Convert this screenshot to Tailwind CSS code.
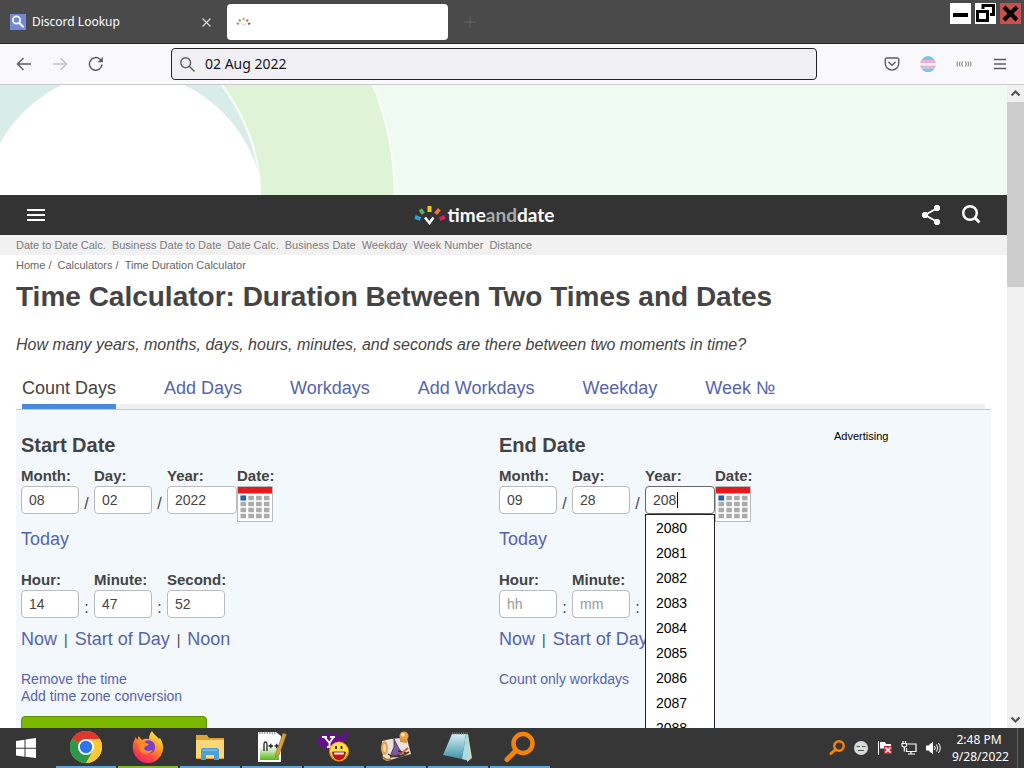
<!DOCTYPE html>
<html lang="en">

<head>
    <meta charset="UTF-8">
    <meta name="viewport" content="width=device-width, initial-scale=1.0">
    <title>Time Calculator: Duration Between Two Times and Dates</title>
    <script src="https://cdn.jsdelivr.net/npm/@tailwindcss/browser@4"></script>
</head>

<body class="h-screen flex flex-col overflow-hidden bg-white font-['Liberation_Sans',sans-serif] text-[#444]">
    <!-- Tab strip -->
    <header class="h-11 shrink-0 flex items-start bg-[#4a4a4a] border-b border-[#222] font-['Noto_Sans',sans-serif]">
        <div class="w-[223px] h-11 pl-[10px] pr-3 flex items-center gap-[6px] text-white text-xs">
            <svg class="size-4" viewBox="0 0 16 16">
                <rect width="16" height="16" fill="#7289da" />
                <circle cx="6.5" cy="6" r="3.6" fill="none" stroke="#fff" stroke-width="1.7" />
                <path d="M9.2 8.8l4.3 4.4" stroke="#fff" stroke-width="2" />
            </svg>
            <span class="flex-1">Discord Lookup</span>
            <button aria-label="Close tab">
                <svg class="size-[9px]" viewBox="0 0 9 9" stroke="#ddd" stroke-width="1.1">
                    <path d="M.5.5l8 8M8.5.5l-8 8" />
                </svg>
            </button>
        </div>
        <div class="w-[221px] h-9 mt-1 ml-1 px-[9px] flex items-center rounded bg-white">
            <svg class="w-[15px] h-[10px]" viewBox="0 0 15 10">
                <path d="M.8 6.2l2.2 1" stroke="#7b97a5" stroke-width="2" />
                <path d="M3 2.6l1.600 1.800" stroke="#8aa06a" stroke-width="2" />
                <path d="M7.500.8v2.400" stroke="#c8a658" stroke-width="2" />
                <path d="M12 2.600l-1.600 1.800" stroke="#b9764f" stroke-width="2" />
                <path d="M14.200 6.200l-2.200 1" stroke="#a8576f" stroke-width="2" />
                <path d="M5.500 6.500l2 2 2-2" fill="none" stroke="#ccc" stroke-width="1" />
            </svg>
        </div>
        <button class="ml-4 mt-4" aria-label="New tab">
            <svg class="size-3" viewBox="0 0 12 12" stroke="#666" stroke-width="1">
                <path d="M6 0v12M0 6h12" />
            </svg>
        </button>
        <div class="ml-auto mt-[3px] mr-[3px] flex gap-1">
            <button class="size-[21px] bg-white" aria-label="Minimize">
                <svg viewBox="0 0 21 21">
                    <path d="M3 12h15" stroke="#000" stroke-width="4" />
                </svg>
            </button>
            <button class="size-[21px] bg-white" aria-label="Restore">
                <svg viewBox="0 0 21 21" fill="none" stroke="#000" stroke-width="3">
                    <path d="M2.500 8.500h10v9h-10z" />
                    <path d="M8 6V2.500h10.500v9H15" />
                </svg>
            </button>
            <button class="size-[21px] bg-[#c75050]" aria-label="Close">
                <svg viewBox="0 0 21 21">
                    <path d="M4 4l13 13M17 4L4 17" stroke="#000" stroke-width="4.200" />
                </svg>
            </button>
        </div>
    </header>

    <!-- Toolbar -->
    <nav class="h-[41px] shrink-0 px-4 flex items-center bg-[#f9f9fb] border-b border-[#ccc] font-['Noto_Sans',sans-serif]">
        <button aria-label="Back">
            <svg class="size-4" viewBox="0 0 16 16" fill="none" stroke="#5b5b66" stroke-width="1.400">
                <path d="M15 8H1.500M7.500 2l-6 6 6 6" />
            </svg>
        </button>
        <button class="ml-5" aria-label="Forward">
            <svg class="size-4" viewBox="0 0 16 16" fill="none" stroke="#c4c4c8" stroke-width="1.400">
                <path d="M1 8h13.500M8.500 2l6 6-6 6" />
            </svg>
        </button>
        <button class="ml-5" aria-label="Reload">
            <svg class="size-4" viewBox="0 0 16 16" fill="none" stroke="#5b5b66" stroke-width="1.500">
                <path d="M14 8.500a6.300 6.300 0 1 1-2-5.200l2.500 2.500" />
                <path d="M14.800 1v5.200H9.600z" fill="#5b5b66" stroke="none" />
            </svg>
        </button>
        <div class="h-8 mx-[67px] flex-1 pl-2 flex items-center gap-[10px] rounded bg-[#f0f0f4] border border-[#222]">
            <svg class="size-[15px]" viewBox="0 0 15 15" fill="none" stroke="#5b5b66" stroke-width="1.400">
                <circle cx="5.700" cy="5.700" r="4.900" />
                <path d="M9.300 9.300l5.200 5.200" />
            </svg>
            <input class="flex-1 text-sm text-[#15141a] outline-none" type="text" aria-label="Address" value="02 Aug 2022">
        </div>
        <div class="flex items-center gap-5">
            <button aria-label="Save to Pocket">
                <svg class="size-4" viewBox="0 0 16 16" fill="none" stroke="#5b5b66" stroke-width="1.400" stroke-linejoin="round" stroke-linecap="round">
                    <path d="M2.500 2h11a1.300 1.300 0 0 1 1.300 1.300v4a6.800 6.800 0 0 1-13.600 0v-4A1.300 1.300 0 0 1 2.500 2z" />
                    <path d="M4.800 6.300L8 9.300l3.200-3" />
                </svg>
            </button>
            <button aria-label="Extension">
                <svg class="size-4" viewBox="0 0 16 16">
                    <path d="M3 2a8 8 0 0 1 10 0l1.500 2h-13z" fill="#7fc4e4" />
                    <path d="M1.200 4h13.600l1.200 3H0z" fill="#e6b3d3" />
                    <path d="M0 7h16v2.500H0z" fill="#f7eef5" />
                    <path d="M0 9.500h16l-1.200 3H1.200z" fill="#e6b3d3" />
                    <path d="M1.500 12.500h13l-1.500 2a8 8 0 0 1-10 0z" fill="#7fc4e4" />
                </svg>
            </button>
            <button aria-label="Broadcast">
                <svg class="size-4" viewBox="0 0 16 16" fill="none" stroke="#77777d" stroke-width="1">
                    <path d="M1.500 5.500q-1 2.500 0 5M4 5.500q-1 2.500 0 5M6.500 5.500q-1.500 2.500 0 5M9.500 5.500q1.500 2.500 0 5M12 5.500q1 2.500 0 5M14.500 5.500q1 2.500 0 5" />
                </svg>
            </button>
            <button aria-label="Menu">
                <svg class="size-4" viewBox="0 0 16 16" stroke="#5b5b66" stroke-width="1.300">
                    <path d="M2 3.500h12M2 8h12M2 12.500h12" />
                </svg>
            </button>
        </div>
    </nav>

    <!-- Page -->
    <div class="flex-1 min-h-0 flex">
        <main class="flex-1 min-w-0 overflow-hidden">
            <!-- Ad banner -->
            <div class="h-[110px] bg-[#eefaf2]">
                <svg class="w-[400px] h-[110px]" viewBox="0 0 400 110">
                    <path d="M0 0H230L270 110H0z" fill="#d8ede8" />
                    <circle cx="123" cy="127" r="141" fill="#fff" />
                    <path d="M222 0Q260 52 260 110H394Q393 50 372 0z" fill="#dff3d7" />
                    <path d="M222 0Q260 52 260 110" fill="none" stroke="#fbfffb" stroke-width="2" />
                    <path d="M373 0Q394 50 395 110" fill="none" stroke="#f6fdf8" stroke-width="2" />
                </svg>
            </div>

            <!-- Site header -->
            <div class="h-10 pl-[27px] pr-[26px] grid grid-cols-[1fr_auto_1fr] items-center bg-[#333]">
                <button class="w-[18px]" aria-label="Site menu">
                    <svg class="w-[18px] h-3" viewBox="0 0 18 12" fill="#fff">
                        <path d="M0 0h18v2H0zM0 5h18v2H0zM0 10h18v2H0z" />
                    </svg>
                </button>
                <a href="#" class="-ml-10 flex items-center gap-[2px] font-['Lato',sans-serif] font-bold text-[19px] leading-5 text-white">
                    <svg class="w-8 h-5" viewBox="0 0 32 20">
                        <path d="M1 11.800l5.500 2.200" stroke="#2f9fe0" stroke-width="4" />
                        <path d="M6.300 4.300l3 4.500" stroke="#5cb05a" stroke-width="3.800" />
                        <path d="M15.500 1v6" stroke="#f5c518" stroke-width="4" />
                        <path d="M25.500 4.300l-4 4.500" stroke="#e87a3f" stroke-width="3.800" />
                        <path d="M31 11.800l-5.500 2.200" stroke="#e01f5a" stroke-width="4" />
                        <path d="M11 12.500l4.500 5.500 4-5.500" fill="none" stroke="#fff" stroke-width="2.600" />
                    </svg>
                    <span>time<span class="text-[#aaa]">and</span>date</span>
                </a>
                <div class="flex justify-end gap-5">
                    <button aria-label="Share">
                        <svg class="w-5 h-[22px]" viewBox="0 0 20 22" fill="#fff" stroke="#fff">
                            <path d="M16.500 4L4 11l12.500 7" fill="none" stroke-width="2" />
                            <circle cx="16" cy="4" r="2.700" />
                            <circle cx="4" cy="11" r="2.700" />
                            <circle cx="16" cy="18" r="2.700" />
                        </svg>
                    </button>
                    <button aria-label="Search">
                        <svg class="w-5 h-[22px]" viewBox="0 0 20 22" fill="none" stroke="#fff">
                            <circle cx="9" cy="9" r="6.800" stroke-width="2.500" />
                            <path d="M13.500 13.500l5 5" stroke-width="3" />
                        </svg>
                    </button>
                </div>
            </div>
            <div class="h-5 pl-4 flex items-center gap-[6px] bg-[#f1f1f1] text-[11px] text-[#7c7c7c] whitespace-nowrap">
                <a href="#">Date to Date Calc.</a>
                <a href="#">Business Date to Date</a>
                <a href="#">Date Calc.</a>
                <a href="#">Business Date</a>
                <a href="#">Weekday</a>
                <a href="#">Week Number</a>
                <a href="#">Distance</a>
            </div>
            <div class="h-5 pl-4 flex items-center gap-[6px] text-[11px] text-[#666]">
                <span><a href="#">Home</a> /</span>
                <span><a href="#">Calculators</a> /</span>
                <span>Time Duration Calculator</span>
            </div>

            <div class="px-4">
                <h1 class="pt-1 text-[28px] leading-9 font-bold whitespace-nowrap">Time Calculator: Duration Between Two Times and Dates</h1>
                <p class="pt-[18px] text-base leading-6 italic">How many years, months, days, hours, minutes, and seconds are there between two moments in time?</p>

                <div class="mt-[18px] mx-[6px] flex gap-12 text-lg leading-[26px] text-[#5564ad] whitespace-nowrap border-b-[5px] border-[#eef0f2]">
                    <a href="#" class="-mb-[5px] pb-[3px] border-b-[5px] border-[#4a89dc] text-[#444]">Count Days</a>
                    <a href="#">Add Days</a>
                    <a href="#">Workdays</a>
                    <a href="#">Add Workdays</a>
                    <a href="#">Weekday</a>
                    <a href="#">Week №</a>
                </div>

                <form class="h-[400px] pl-[5px] grid grid-cols-[478fr_335fr_157fr] bg-[#f3f8fc] border-t border-[#c5c9cc]">
                    <!-- Start date -->
                    <section>
                        <h2 class="pt-[21px] text-xl leading-7 font-bold">Start Date</h2>
                        <div class="pt-[7px] flex items-start text-[14px]">
                            <div class="w-[58px]">
                                <label for="startMonth" class="block leading-5 text-[15px] font-bold">Month:</label>
                                <input id="startMonth" type="text" value="08" class="w-full h-7 px-[7px] bg-white border border-[#bbb] rounded">
                            </div>
                            <span class="w-[15px] pt-[26px] text-center text-base leading-6">/</span>
                            <div class="w-[58px]">
                                <label for="startDay" class="block leading-5 text-[15px] font-bold">Day:</label>
                                <input id="startDay" type="text" value="02" class="w-full h-7 px-[7px] bg-white border border-[#bbb] rounded">
                            </div>
                            <span class="w-[15px] pt-[26px] text-center text-base leading-6">/</span>
                            <div class="w-[70px]">
                                <label for="startYear" class="block leading-5 text-[15px] font-bold">Year:</label>
                                <input id="startYear" type="text" value="2022" class="w-full h-7 px-[7px] bg-white border border-[#bbb] rounded">
                            </div>
                            <div class="w-9">
                                <div class="leading-5 text-[15px] font-bold">Date:</div>
                                <button type="button" class="block" aria-label="Pick start date">
                                    <svg class="size-9" viewBox="0 0 36 36">
                                        <path d="M.5.5h35v35H.5z" fill="#fff" stroke="#bbb" />
                                        <path d="M1 1h34v6.500H1z" fill="#e8191c" />
                                        <path d="M3.500 12h29M3.500 18h29M3.500 24h29M3.500 30h29" stroke="#aaa" stroke-width="4.600" stroke-dasharray="5.600 2.200" />
                                        <path d="M3.500 9.500h5.600v5H3.500z" fill="#1c63ad" />
                                    </svg>
                                </button>
                            </div>
                        </div>
                        <a href="#" class="block pt-1 text-lg leading-[26px] text-[#5564ad]">Today</a>
                        <div class="pt-[18px] flex items-start text-[14px]">
                            <div class="w-[58px]">
                                <label for="startHour" class="block leading-5 text-[15px] font-bold">Hour:</label>
                                <input id="startHour" type="text" value="14" class="w-full h-7 px-[7px] bg-white border border-[#bbb] rounded">
                            </div>
                            <span class="w-[15px] pt-[26px] text-center text-base leading-6">:</span>
                            <div class="w-[58px]">
                                <label for="startMinute" class="block leading-5 text-[15px] font-bold">Minute:</label>
                                <input id="startMinute" type="text" value="47" class="w-full h-7 px-[7px] bg-white border border-[#bbb] rounded">
                            </div>
                            <span class="w-[15px] pt-[26px] text-center text-base leading-6">:</span>
                            <div class="w-[58px]">
                                <label for="startSecond" class="block leading-5 text-[15px] font-bold">Second:</label>
                                <input id="startSecond" type="text" value="52" class="w-full h-7 px-[7px] bg-white border border-[#bbb] rounded">
                            </div>
                        </div>
                        <div class="pt-[6px] flex items-baseline gap-[7px] text-lg leading-[26px] text-[#5564ad]">
                            <a href="#">Now</a>
                            <span class="text-sm text-[#444]">|</span>
                            <a href="#">Start of Day</a>
                            <span class="text-sm text-[#444]">|</span>
                            <a href="#">Noon</a>
                        </div>
                        <div class="pt-[19px] text-sm leading-[17px] text-[#5564ad]">
                            <a href="#" class="block">Remove the time</a>
                            <a href="#" class="block">Add time zone conversion</a>
                        </div>
                        <button type="submit" class="mt-[11px] w-[186px] h-10 rounded bg-[#7ab800] border border-[#5f9000]" aria-label="Calculate duration"></button>
                    </section>

                    <!-- End date -->
                    <section>
                        <h2 class="pt-[21px] text-xl leading-7 font-bold">End Date</h2>
                        <div class="pt-[7px] flex items-start text-[14px]">
                            <div class="w-[58px]">
                                <label for="endMonth" class="block leading-5 text-[15px] font-bold">Month:</label>
                                <input id="endMonth" type="text" value="09" class="w-full h-7 px-[7px] bg-white border border-[#bbb] rounded">
                            </div>
                            <span class="w-[15px] pt-[26px] text-center text-base leading-6">/</span>
                            <div class="w-[58px]">
                                <label for="endDay" class="block leading-5 text-[15px] font-bold">Day:</label>
                                <input id="endDay" type="text" value="28" class="w-full h-7 px-[7px] bg-white border border-[#bbb] rounded">
                            </div>
                            <span class="w-[15px] pt-[26px] text-center text-base leading-6">/</span>
                            <div class="w-[70px] relative">
                                <label for="endYear" class="block leading-5 text-[15px] font-bold">Year:</label>
                                <input id="endYear" type="text" value="208" class="w-full h-7 px-[7px] bg-white border border-[#666] rounded">
                                <!-- Text cursor -->
                                <span class="absolute left-8 top-[26px] w-px h-4 bg-black"></span>
                                <!-- Autocomplete list -->
                                <ul class="absolute left-0 top-12 z-10 w-[70px] pt-px pl-[10px] bg-white border border-[#222] text-[14px] leading-[25px] text-black">
                                    <li>2080</li>
                                    <li>2081</li>
                                    <li>2082</li>
                                    <li>2083</li>
                                    <li>2084</li>
                                    <li>2085</li>
                                    <li>2086</li>
                                    <li>2087</li>
                                    <li>2088</li>
                                </ul>
                            </div>
                            <div class="w-9">
                                <div class="leading-5 text-[15px] font-bold">Date:</div>
                                <button type="button" class="block" aria-label="Pick end date">
                                    <svg class="size-9" viewBox="0 0 36 36">
                                        <path d="M.5.5h35v35H.5z" fill="#fff" stroke="#bbb" />
                                        <path d="M1 1h34v6.500H1z" fill="#e8191c" />
                                        <path d="M3.500 12h29M3.500 18h29M3.500 24h29M3.500 30h29" stroke="#aaa" stroke-width="4.600" stroke-dasharray="5.600 2.200" />
                                        <path d="M3.500 9.500h5.600v5H3.500z" fill="#1c63ad" />
                                    </svg>
                                </button>
                            </div>
                        </div>
                        <a href="#" class="block pt-1 text-lg leading-[26px] text-[#5564ad]">Today</a>
                        <div class="pt-[18px] flex items-start text-[14px]">
                            <div class="w-[58px]">
                                <label for="endHour" class="block leading-5 text-[15px] font-bold">Hour:</label>
                                <input id="endHour" type="text" placeholder="hh" class="w-full h-7 px-[7px] bg-white border border-[#bbb] rounded placeholder:text-[#999]">
                            </div>
                            <span class="w-[15px] pt-[26px] text-center text-base leading-6">:</span>
                            <div class="w-[58px]">
                                <label for="endMinute" class="block leading-5 text-[15px] font-bold">Minute:</label>
                                <input id="endMinute" type="text" placeholder="mm" class="w-full h-7 px-[7px] bg-white border border-[#bbb] rounded placeholder:text-[#999]">
                            </div>
                            <span class="w-[15px] pt-[26px] text-center text-base leading-6">:</span>
                        </div>
                        <div class="pt-[6px] flex items-baseline gap-[7px] text-lg leading-[26px] text-[#5564ad]">
                            <a href="#">Now</a>
                            <span class="text-sm text-[#444]">|</span>
                            <a href="#">Start of Day</a>
                        </div>
                        <div class="pt-[19px] text-sm leading-[17px] text-[#5564ad]">
                            <a href="#" class="block">Count only workdays</a>
                        </div>
                    </section>

                    <aside class="pt-[18px] text-[11px] leading-4 text-black">Advertising</aside>
                </form>
            </div>
        </main>

        <!-- Scrollbar -->
        <div class="w-[17px] shrink-0 flex flex-col items-center bg-[#f0f0f0]">
            <svg class="w-[17px] h-[17px] shrink-0" viewBox="0 0 17 17" fill="none" stroke="#505050" stroke-width="2">
                <path d="M4.500 10.500l4-4 4 4" />
            </svg>
            <div class="w-full h-[185px] bg-[#cdcdcd]"></div>
            <svg class="w-[17px] h-[17px] shrink-0 mt-auto" viewBox="0 0 17 17" fill="none" stroke="#505050" stroke-width="2">
                <path d="M4.500 6.500l4 4 4-4" />
            </svg>
        </div>
    </div>

    <!-- Taskbar -->
    <footer class="h-10 shrink-0 flex bg-[#363636] text-white font-['Noto_Sans',sans-serif]">
        <button class="w-14 pr-1 flex items-center justify-center" aria-label="Start">
            <svg class="size-5" viewBox="0 0 20 20" fill="#fff">
                <path d="M0 3l8.500-1.300v8H0zM9.500 1.500L20 0v9.700H9.500zM0 10.700h8.500v8L0 17.500zM9.500 10.700H20V20L9.500 18.700z" />
            </svg>
        </button>
        <div class="flex gap-[2px]">
            <button class="w-[60px] flex items-center justify-center border-b-2 border-[#5aa7e0]" aria-label="Chrome">
                <svg class="size-8" viewBox="0 0 32 32">
                    <circle cx="16" cy="16" r="16" fill="#fcc934" />
                    <path d="M16 16L2.100 8A16 16 0 0 1 29.900 8z" fill="#e0392b" />
                    <path d="M2.100 8A16 16 0 0 0 16 32l7-12-7-4z" fill="#2a9a48" />
                    <path d="M16 8h13.900A16 16 0 0 1 16 32l7-12z" fill="#fcc934" />
                    <circle cx="16" cy="16" r="8" fill="#fff" />
                    <circle cx="16" cy="16" r="6.200" fill="#2f74e8" />
                </svg>
            </button>
            <button class="w-[60px] flex items-center justify-center border-b-2 border-[#82bb2c]" aria-label="Firefox">
                <svg class="size-8" viewBox="0 0 32 32">
                    <defs>
                        <linearGradient id="fox" x1=".8" y1="0" x2=".2" y2="1">
                            <stop offset="0" stop-color="#fff04f" />
                            <stop offset=".35" stop-color="#ffa329" />
                            <stop offset=".7" stop-color="#ff4a3e" />
                            <stop offset="1" stop-color="#e4197c" />
                        </linearGradient>
                    </defs>
                    <path d="M20 0c1 3 5 5 7 8l1-1c3 5 4 9 2.500 14A15 15 0 0 1 1.500 21C0 16 1 11 3 8l.5-2 2 3 1-4 3.500 4c3-2 6-1 7-1 0-3 1-6 3-8z" fill="url(#fox)" />
                    <circle cx="16.500" cy="16" r="6.700" fill="#7a3fd0" />
                    <path d="M6 10c4-1 6 0 8 2l3 1c-1 2-4 2-5 4 1 4 6 3 9 2-4 6-12 5-14-1z" fill="#ff8a25" />
                </svg>
            </button>
            <button class="w-[60px] flex items-center justify-center border-b-2 border-[#5aa7e0]" aria-label="File Explorer">
                <svg class="size-8" viewBox="0 0 32 32">
                    <path d="M2 4h11l2 3h15v21H2z" fill="#dca535" />
                    <path d="M2 9h28v18H2z" fill="#fbd875" />
                    <path d="M7 29V19q0-2 2-2h14q2 0 2 2v10h-5v-5h-8v5z" fill="#4d9fd6" />
                    <path d="M9 18.500h14v1.500H9z" fill="#78bde8" />
                </svg>
            </button>
            <button class="w-[60px] flex items-center justify-center border-b-2 border-[#5aa7e0]" aria-label="Notepad++">
                <svg class="size-8" viewBox="0 0 32 32">
                    <defs>
                        <linearGradient id="npp" x1="0" y1="0" x2="0" y2="1">
                            <stop offset=".35" stop-color="#fff" />
                            <stop offset="1" stop-color="#55b713" />
                        </linearGradient>
                    </defs>
                    <path d="M2 1h18l5 4v26H2z" fill="#fff" />
                    <path d="M4 8h19v21H4z" fill="url(#npp)" />
                    <path d="M3 2h17" stroke="#aaa" stroke-width="2" stroke-dasharray="1.500 1" />
                    <path d="M8 20v-7q0-2 1.500-2t1.500 2v7M12.500 15h4.500M14.800 12.800v4.500M18.500 15H23M20.700 12.800v4.500" fill="none" stroke="#222" stroke-width="1.300" />
                    <path d="M27 2l3.500 1.500L23 24l-3.500 2 .5-4z" fill="#d7a33f" stroke="#8a6320" stroke-width=".6" />
                </svg>
            </button>
            <button class="w-[60px] flex items-center justify-center border-b-2 border-[#5aa7e0]" aria-label="Yahoo Messenger">
                <svg class="size-8" viewBox="0 0 32 32">
                    <ellipse cx="12" cy="10" rx="12.500" ry="8" fill="#65108a" />
                    <path d="M25 2l6-1-5 11-4 2z" fill="#5c1688" />
                    <path d="M4 6h5M12 6h5M6.500 6l5 6 4-6M11.500 12v4M9 16h5" fill="none" stroke="#fff" stroke-width="1.900" />
                    <circle cx="21" cy="20.500" r="10" fill="#f28e13" />
                    <circle cx="21" cy="20" r="8.800" fill="#ffe14d" />
                    <path d="M14.500 21h13q-.5 7.500-6.500 7.500T14.500 21z" fill="#c9131c" stroke="#5b1a00" stroke-width=".8" />
                    <path d="M16 21.500h10l-.5 2h-9z" fill="#fff" />
                    <path d="M18 15v3M23.500 15v3" stroke="#3a1f00" stroke-width="1.800" />
                </svg>
            </button>
            <button class="w-[60px] flex items-center justify-center border-b-2 border-[#5aa7e0]" aria-label="Wizard">
                <svg class="size-8" viewBox="0 0 32 32">
                    <path d="M2 10q13-4 25-2l4 15q-12 3-24 7l-4-2z" fill="#e8e4dc" />
                    <ellipse cx="4.500" cy="17" rx="3.500" ry="7" fill="#e3a257" />
                    <ellipse cx="4.500" cy="17" rx="1.500" ry="4" fill="#f6d6a2" />
                    <path d="M3 26q3 4 8 2" stroke="#b97329" stroke-width="2" fill="none" />
                    <path d="M14 8l4 8 4 6q-6 4-11 1l3-7z" fill="#7b5d9f" stroke="#38284c" stroke-width=".8" />
                    <path d="M8 23q8 6 21-2M18 20l8 2M10 26l14-2" stroke="#4b2c22" stroke-width="1.500" fill="none" />
                    <path d="M22 22l6-5" stroke="#de5b24" stroke-width="2" />
                    <circle cx="24" cy="5" r="4.500" fill="#e9a24c" />
                    <circle cx="23" cy="3.800" r="1.800" fill="#ffe7b8" />
                    <path d="M20 8l8 1-1 3-7-1z" fill="#d8903a" />
                </svg>
            </button>
            <button class="w-[60px] flex items-center justify-center border-b-2 border-[#5aa7e0]" aria-label="Notepad">
                <svg class="size-8" viewBox="0 0 32 32">
                    <defs>
                        <linearGradient id="pad" x1="0" y1="0" x2="0" y2="1">
                            <stop offset="0" stop-color="#d7eff3" />
                            <stop offset="1" stop-color="#3f93a8" />
                        </linearGradient>
                    </defs>
                    <path d="M26 3l4 24-5 4z" fill="#d8d5ae" />
                    <path d="M10 3h14l-4 25-19-4z" fill="url(#pad)" />
                    <path d="M24 3h2l1 27-7-2z" fill="#a9dbe4" />
                    <path d="M10 2.500h16" stroke="#778" stroke-width="2" stroke-dasharray="1.200 1" />
                </svg>
            </button>
            <button class="w-[60px] flex items-center justify-center border-b-2 border-[#5aa7e0]" aria-label="Search app">
                <svg class="size-8" viewBox="0 0 32 32" fill="none" stroke="#f5820b">
                    <circle cx="19" cy="12.500" r="9.500" stroke-width="4.500" />
                    <path d="M12 19.500l-9 9" stroke-width="5" stroke-linecap="round" />
                </svg>
            </button>
        </div>

        <!-- Tray -->
        <div class="ml-auto flex items-center gap-2 text-xs">
            <svg class="size-4" viewBox="0 0 16 16" fill="none" stroke="#f5820b">
                <circle cx="10" cy="6" r="4.700" stroke-width="2.500" />
                <path d="M6.500 9.500l-4.500 4" stroke-width="3" stroke-linecap="round" />
            </svg>
            <svg class="size-4" viewBox="0 0 16 16">
                <circle cx="8" cy="8" r="7" fill="#d5dadd" />
                <path d="M3.500 6.500h3.500M9 6.500h3.500M5 10.500h6" stroke="#555" stroke-width="1.200" />
            </svg>
            <svg class="size-4" viewBox="0 0 16 16">
                <path d="M1.500 1v14" stroke="#fff" />
                <path d="M3 2h5l1 2h5v6H9L8 8.500H3z" fill="#fff" />
                <path d="M7 6h8v8H7z" fill="#c92b38" />
                <path d="M8.500 7.500l5 5M13.500 7.500l-5 5" stroke="#fff" stroke-width="1.500" />
            </svg>
            <svg class="size-4" viewBox="0 0 16 16" fill="none" stroke="#fff" stroke-width="1.200">
                <path d="M6.500 4h8.500v7.500H5.500V8M10 11.500v2M7 14h7" />
                <path d="M1 3.500h4.500V6L3.300 7.500 1 6zM2 1v2.500M4.500 1v2.500M3.300 7.500v4" />
            </svg>
            <svg class="size-4" viewBox="0 0 16 16" fill="none" stroke="#fff">
                <path d="M1 5.500h2.500L8 1.500v13l-4.500-4H1z" fill="#fff" stroke="none" />
                <path d="M9.500 6q1.500 2 0 4M11.500 4.500q2.500 3.500 0 7M13.500 3q3.500 5 0 10" />
            </svg>
            <div class="ml-[3px] w-[54px] text-center leading-[17px] whitespace-nowrap">
                <div>2:48 PM</div>
                <div>9/28/2022</div>
            </div>
            <div class="ml-[3px] mr-[6px] w-px h-10 bg-[#666]"></div>
        </div>
    </footer>
</body>

</html>
